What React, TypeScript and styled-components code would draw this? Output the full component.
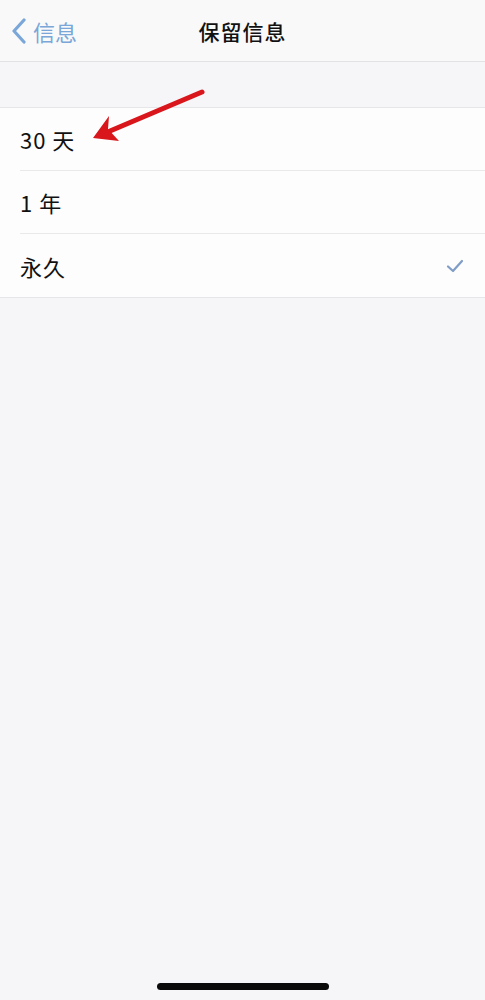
import React from "react";
import styled, { createGlobalStyle } from "styled-components";

const Global = createGlobalStyle`
  html, body { margin: 0; padding: 0; }
  body {
    background: #f6f6f8;
    font-family: "Noto Sans CJK SC", "Noto Sans", sans-serif;
  }
`;

const Screen = styled.div`
  position: relative;
  width: 485px;
  height: 1000px;
  background: #f6f6f8;
  display: flex;
  flex-direction: column;
  overflow: hidden;
`;

const NavBar = styled.div`
  height: 62px;
  background: #f9f9fa;
  border-bottom: 1px solid #e2e2e4;
  display: flex;
  align-items: center;
  justify-content: center;
  position: relative;
  box-sizing: border-box;
`;

const Back = styled.div`
  position: absolute;
  left: 10px;
  top: 0;
  bottom: 0;
  display: flex;
  align-items: center;
  gap: 5px;
  color: #7aa7d8;
  font-size: 22px;
`;

const Title = styled.div`
  font-size: 21px;
  font-weight: 500;
  color: #111;
  letter-spacing: 1px;
`;

const Spacer = styled.div`
  height: 45px;
  border-bottom: 1px solid #e6e6e8;
`;

const List = styled.div`
  background: #fdfdfd;
  border-bottom: 1px solid #e6e6e8;
  display: flex;
  flex-direction: column;
`;

const Row = styled.div<{ $last?: boolean }>`
  height: 63px;
  display: flex;
  align-items: center;
  margin-left: 20px;
  padding-right: 20px;
  box-sizing: border-box;
  border-bottom: ${(p) => (p.$last ? "none" : "1px solid #e9e9eb")};
  justify-content: space-between;
`;

const Label = styled.span`
  font-size: 22px;
  color: #111;
  letter-spacing: 1px;
`;

const HomeBar = styled.div`
  position: absolute;
  left: 157px;
  top: 983px;
  width: 172px;
  height: 7px;
  border-radius: 4px;
  background: #0a0a0a;
`;

const Arrow = styled.svg`
  position: absolute;
  left: 0;
  top: 0;
  pointer-events: none;
`;

export default function App() {
  return (
    <Screen>
      <Global />
      <NavBar>
        <Back>
          <svg width="18" height="26" viewBox="0 0 18 26">
            <path d="M14 2 L4 13 L14 24" fill="none" stroke="#7aa7d8" strokeWidth="3.2" strokeLinecap="round" strokeLinejoin="round" />
          </svg>
          <span>信息</span>
        </Back>
        <Title>保留信息</Title>
      </NavBar>
      <Spacer />
      <List>
        <Row><Label>30 天</Label></Row>
        <Row><Label>1 年</Label></Row>
        <Row $last>
          <Label>永久</Label>
          <svg width="20" height="16" viewBox="0 0 20 16">
            <path d="M3 8.5 L8 13 L17 3" fill="none" stroke="#7f9dc6" strokeWidth="2.2" strokeLinecap="round" strokeLinejoin="round" />
          </svg>
        </Row>
      </List>
      <Arrow width="485" height="200" viewBox="0 0 485 200">
        <path d="M202 92 L110 131" stroke="#d9161b" strokeWidth="5" strokeLinecap="round" />
        <path d="M93 138 L109 116 L108 129 L119 141 Z" fill="#d9161b" />
      </Arrow>
      <HomeBar />
    </Screen>
  );
}
